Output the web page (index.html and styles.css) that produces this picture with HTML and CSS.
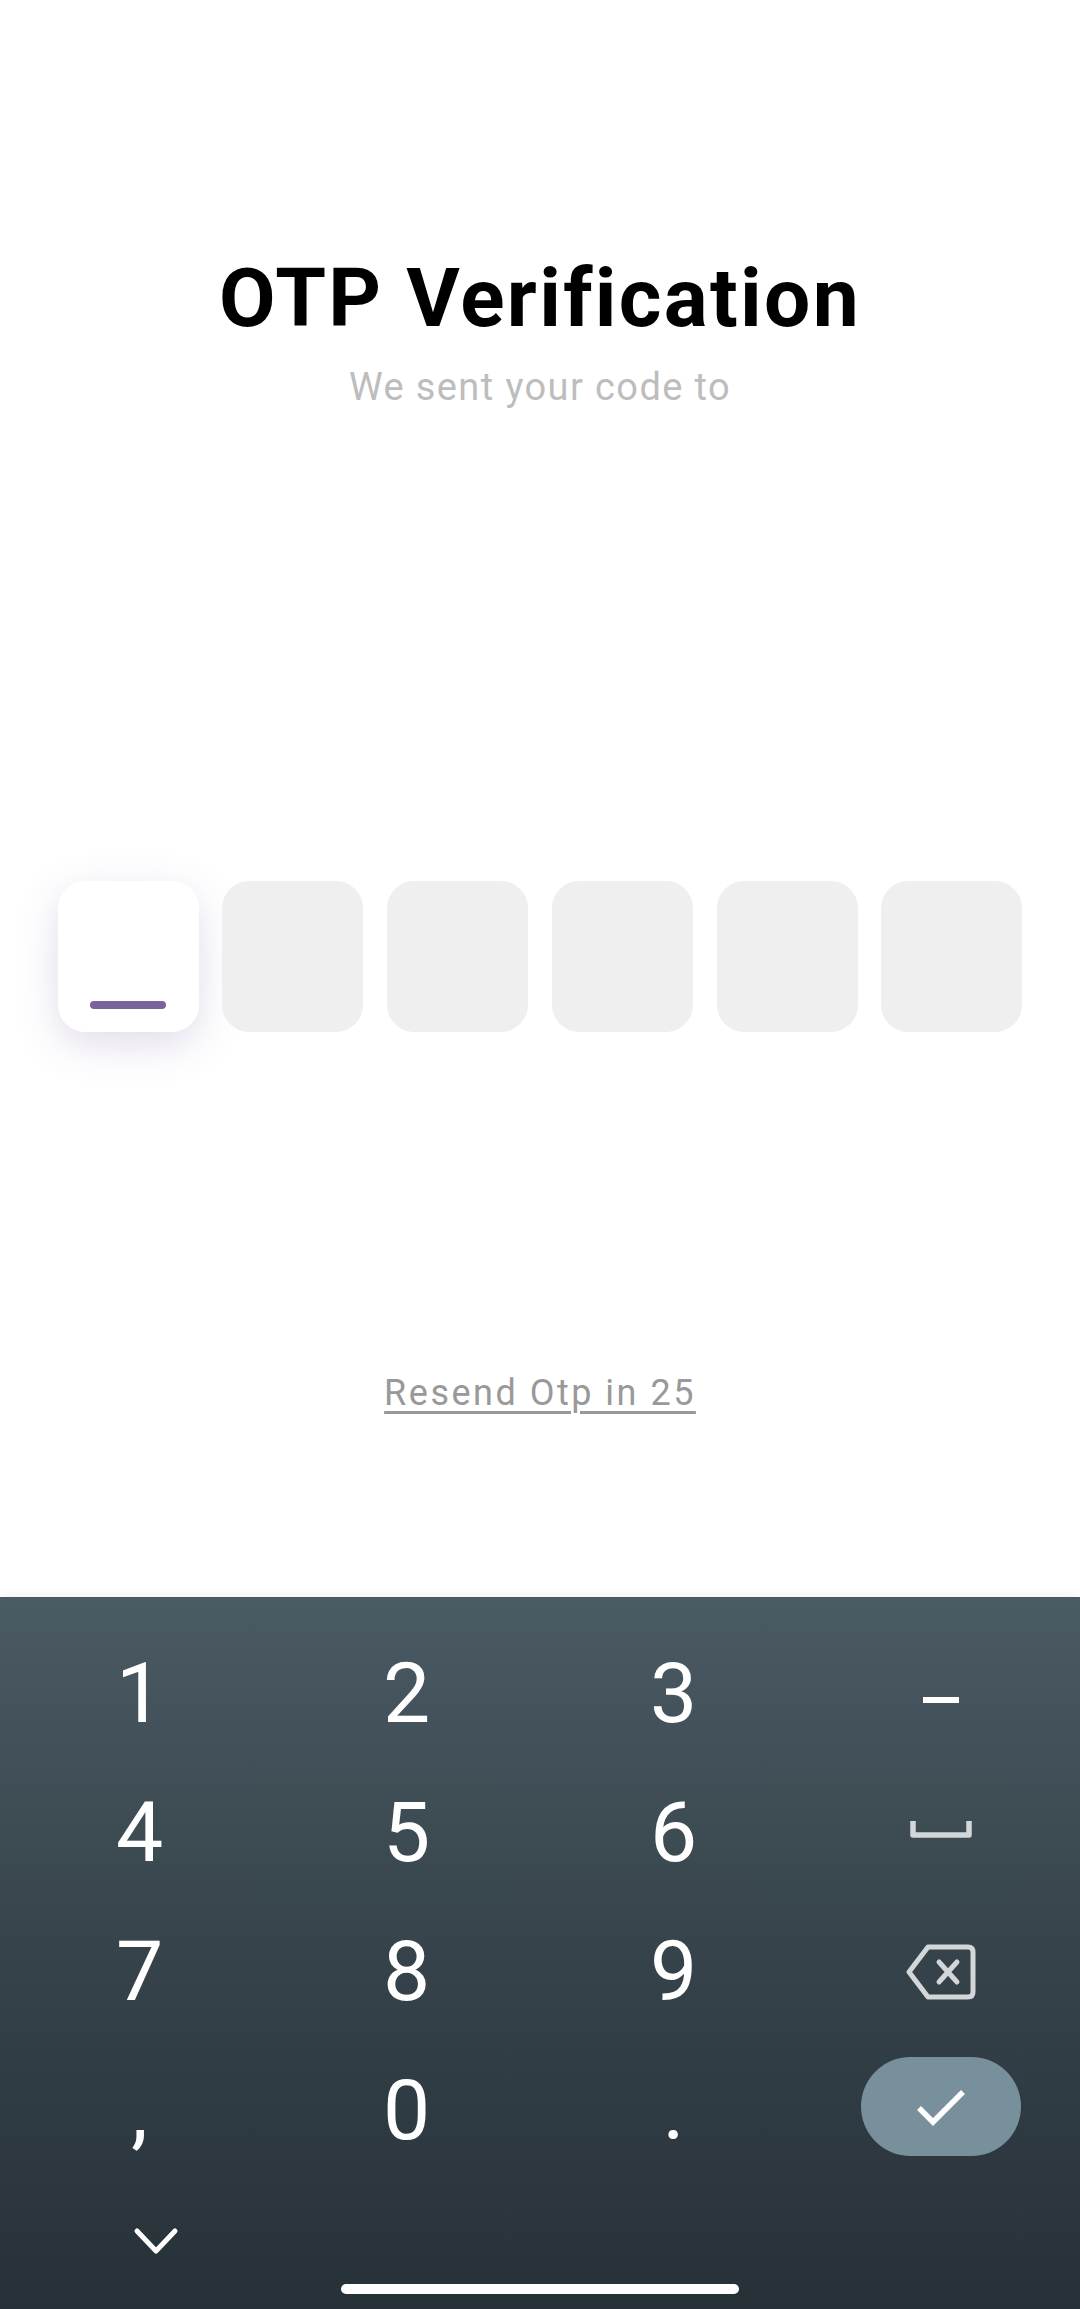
FILE: index.html
```html
<!DOCTYPE html>
<html>
<head>
<meta charset="utf-8">
<link rel="stylesheet" href="styles.css">
</head>
<body>
<div class="screen">
  <main class="content">
    <h1 class="title">OTP Verification</h1>
    <p class="subtitle">We sent your code to</p>
    <div class="otp-row">
      <div class="otp-box active"><span class="cursor"></span></div>
      <div class="otp-box"></div>
      <div class="otp-box"></div>
      <div class="otp-box"></div>
      <div class="otp-box"></div>
      <div class="otp-box"></div>
    </div>
    <a class="resend">Resend Otp in 25</a>
  </main>
  <section class="keyboard">
    <div class="keys">
      <div class="key">1</div>
      <div class="key">2</div>
      <div class="key">3</div>
      <div class="key"><span class="minus"></span></div>
      <div class="key">4</div>
      <div class="key">5</div>
      <div class="key">6</div>
      <div class="key">
        <svg class="space-icon" width="62" height="18" viewBox="0 0 62 18"><path d="M3 1 V15 H59 V1" fill="none" stroke="#d3d7d9" stroke-width="5.5" stroke-linejoin="round"/></svg>
      </div>
      <div class="key">7</div>
      <div class="key">8</div>
      <div class="key">9</div>
      <div class="key">
        <svg class="back-icon" width="70" height="56" viewBox="0 0 70 56"><path d="M22 3 H62 Q67 3 67 8 V48 Q67 53 62 53 H22 L3 28 Z" fill="none" stroke="#d3d7d9" stroke-width="5" stroke-linejoin="round"/><path d="M33 18 L51 38 M51 18 L33 38" stroke="#d3d7d9" stroke-width="5" stroke-linecap="round"/></svg>
      </div>
      <div class="key punct">,</div>
      <div class="key">0</div>
      <div class="key punct">.</div>
      <div class="key">
        <div class="enter">
          <svg width="50" height="40" viewBox="0 0 50 40"><path d="M3 22 L17 36 L47 6" fill="none" stroke="#ffffff" stroke-width="5.5"/></svg>
        </div>
      </div>
    </div>
    <div class="bottom-row">
      <svg class="chevron" width="46" height="30" viewBox="0 0 46 30"><path d="M4 5 L23 25 L42 5" fill="none" stroke="#ffffff" stroke-width="5" stroke-linecap="round" stroke-linejoin="round"/></svg>
    </div>
    <div class="home-bar"></div>
  </section>
</div>
</body>
</html>
```
FILE: styles.css
```css
html, body {
  margin: 0;
  padding: 0;
  background: #ffffff;
}
.screen {
  width: 1080px;
  height: 2309px;
  display: flex;
  flex-direction: column;
  overflow: hidden;
  font-family: Roboto, "Liberation Sans", sans-serif;
}
.content {
  height: 1597px;
  flex: none;
  display: flex;
  flex-direction: column;
  align-items: center;
  box-sizing: border-box;
  padding-top: 257px;
}
.title {
  margin: 0;
  font-size: 82px;
  line-height: 82px;
  font-weight: 700;
  color: #000000;
  letter-spacing: 2.3px;
}
.subtitle {
  margin: 29px 0 0;
  font-size: 38px;
  line-height: 38px;
  color: #bdbdbd;
  font-weight: 400;
  letter-spacing: 1.4px;
}
.otp-row {
  margin-top: 475px;
  display: flex;
  gap: 23.8px;
}
.otp-box {
  width: 141px;
  height: 151px;
  border-radius: 27px;
  background: #efefef;
  display: flex;
  justify-content: center;
  align-items: flex-end;
  box-sizing: border-box;
  padding-bottom: 23px;
}
.otp-box.active {
  background: #ffffff;
  box-shadow: 0 12px 40px rgba(120, 96, 160, 0.22);
}
.cursor {
  width: 76px;
  height: 8px;
  border-radius: 4px;
  background: #7b649b;
}
.resend {
  margin-top: 343px;
  font-size: 36px;
  line-height: 36px;
  color: #999999;
  text-decoration: underline;
  text-decoration-thickness: 3px;
  text-underline-offset: 6px;
  letter-spacing: 2.5px;
}
.keyboard {
  flex: 1;
  background: linear-gradient(180deg, #4b5b63 0%, #36434b 50%, #263037 100%);
  box-shadow: 0 -4px 10px rgba(0, 0, 0, 0.04);
  display: flex;
  flex-direction: column;
  box-sizing: border-box;
  padding: 27px 6px 0;
}
.keys {
  display: grid;
  grid-template-columns: repeat(4, 267px);
  grid-auto-rows: 139px;
}
.key {
  display: flex;
  align-items: center;
  justify-content: center;
  color: #ffffff;
  font-size: 84px;
  line-height: 84px;
  font-weight: 400;
}
.minus {
  width: 36px;
  height: 6px;
  background: #ffffff;
  margin-top: 12px;
}
.space-icon {
  margin-top: -8px;
}
.enter {
  width: 160px;
  height: 99px;
  border-radius: 50px;
  background: #78909c;
  display: flex;
  align-items: center;
  justify-content: center;
  margin-top: -9px;
}
.bottom-row {
  height: 70px;
  display: flex;
  align-items: center;
  padding-left: 127px;
  margin-top: 26px;
}
.home-bar {
  width: 398px;
  height: 10px;
  border-radius: 5px;
  background: #ffffff;
  margin: 8px auto 0;
}
```
